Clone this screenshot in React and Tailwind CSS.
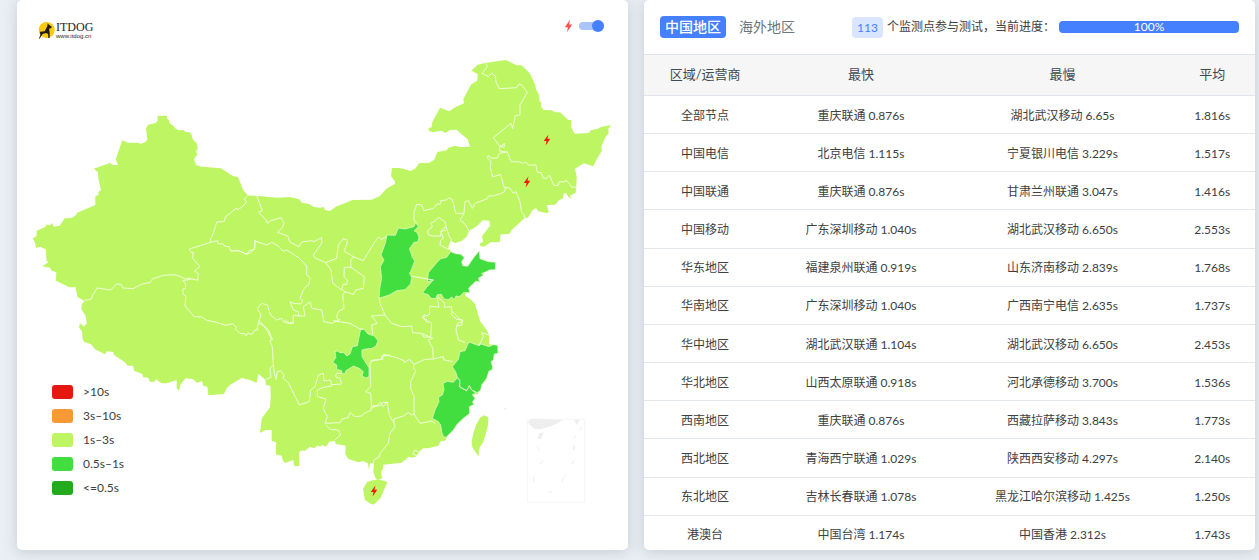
import { useState } from "react";

const legend = [
  { label: ">10s", color: "bg-[#e61610]" },
  { label: "3s–10s", color: "bg-[#f79a36]" },
  { label: "1s–3s", color: "bg-[#bef663]" },
  { label: "0.5s–1s", color: "bg-[#42dd3f]" },
  { label: "<=0.5s", color: "bg-[#24aa1d]" },
];

const rows = [
  ["全部节点", "重庆联通 0.876s", "湖北武汉移动 6.65s", "1.816s"],
  ["中国电信", "北京电信 1.115s", "宁夏银川电信 3.229s", "1.517s"],
  ["中国联通", "重庆联通 0.876s", "甘肃兰州联通 3.047s", "1.416s"],
  ["中国移动", "广东深圳移动 1.040s", "湖北武汉移动 6.650s", "2.553s"],
  ["华东地区", "福建泉州联通 0.919s", "山东济南移动 2.839s", "1.768s"],
  ["华南地区", "广东深圳移动 1.040s", "广西南宁电信 2.635s", "1.737s"],
  ["华中地区", "湖北武汉联通 1.104s", "湖北武汉移动 6.650s", "2.453s"],
  ["华北地区", "山西太原联通 0.918s", "河北承德移动 3.700s", "1.536s"],
  ["西南地区", "重庆联通 0.876s", "西藏拉萨移动 3.843s", "1.773s"],
  ["西北地区", "青海西宁联通 1.029s", "陕西西安移动 4.297s", "2.140s"],
  ["东北地区", "吉林长春联通 1.078s", "黑龙江哈尔滨移动 1.425s", "1.250s"],
  ["港澳台", "中国台湾 1.174s", "中国香港 2.312s", "1.743s"],
];

const mainland =
  "M32.7 238.3 36.7 236 36.7 230.7 45.7 226.7 46 224.5 50 225.3 52 223 53.7 226.7 59.7 225.7 64.7 218.3 71.7 218 75.7 215.3 77.3 212.7 95.3 205 95.3 196.7 98.5 194.5 98.3 192 101 190.3 98.3 178.3 98 172.3 93.7 168.7 110 163 113 165 118 165 115.7 159.3 122.3 140.3 128 142.7 138.3 142.7 140.3 144 145 142.3 147.3 139.7 146 128.3 148.3 124.7 155.7 123 157.7 120.7 157.7 115.7 167.3 115.7 166.7 118.3 169 120 169.3 123 172.7 125.3 176 129 179.3 130.3 183.7 130 185.3 132 189.7 132.3 191.7 134.7 192.7 139.3 196.7 143.3 197.7 148.3 196 151.7 197.3 154.3 194 159.3 196 165 201.7 166.7 221 168.3 232.7 176 238 177 243.3 190 248 195.5 256.7 195.7 276.7 197.7 290 197 299.3 199.3 301.7 202.7 308.3 203.7 314 207 319.3 207.7 324 207 324.7 210 330 211 336.7 206.3 345 203.3 352 200 371.7 199.7 380 196 386 189 395 183.7 395 181.5 391 176 392 168 400 168 410.7 171 415.7 168.3 419 163.3 429.3 162.7 434.3 159.7 437.3 152 446.7 150.3 448.3 148 455 145.7 460 147 470 146.7 467.7 139.3 461.7 134.3 456.7 129.7 450 130 445.7 133 441.7 130.7 432.7 132.3 428.7 130.7 428.7 128 431.7 127.3 432.3 122 440 107.7 449.3 111.3 456 106.7 464 103.3 463.3 99.3 465 95.7 471.3 84.3 477.3 80.7 477.7 74 471.3 70.7 477.7 64.7 485 63 505.7 60 516.7 65.3 521.3 65.3 525.3 68.7 530 73.7 535.3 85 536 89.3 539.3 95.7 539.3 101 541.3 102.7 541 106.7 543.7 110 551.7 110.3 555.3 112.3 560 112.3 568.3 120 571.3 120 571 127.3 574.7 133.7 588.7 133 590.7 130.3 597.3 129 602 126.7 611 125 608.3 129 608.7 133.3 605.3 137.3 601.3 146.7 602 150.7 596.7 159.3 593.3 166.3 584 163.3 575 168.7 576.7 176.7 576.3 186.7 575.7 192.7 570 195.7 571 199 568.3 196.7 565.7 193 563.7 193.3 562.7 198.7 559 200 555 204.7 546.7 205 548.7 211.7 547.3 213.3 538.3 211.3 536 208 532.7 210 527.7 218 525 217.7 511.7 230 509.3 234 500.7 234.3 499.7 242.3 490.7 242.3 484 246.7 480.3 246 480 243.3 483.3 241.7 482 236 490 226 489.3 220.7 482.7 220.3 477.3 225.7 469 231 466.7 236.7 461.7 241 455 243 450.7 240.7 448.3 246.7 450.7 251.7 455.7 253.7 461 254.3 464.3 258 461.7 261.3 462.7 265.7 467.7 266.3 474 257.3 479.3 250.7 480 258.7 488.3 261.7 495.7 262.3 495.3 269.7 489.3 270 485 272.3 478.3 278.3 480 282 476 281 468.7 288 469.7 292.7 465 293.7 465.7 296 471.7 300.3 475 304 480 321 486.7 330 489 335 489 344.3 497.7 345.3 498 353.3 494.3 354 493.3 360 491 361.7 492 370 489 371 486.7 378.3 481.7 385 480.7 390 477.3 391.7 478.5 394 472.3 394.7 475 398.3 472.3 402.3 474.3 404.3 469.3 406.7 469.7 413.3 463.3 418.3 457.3 424 453.3 430 448.3 435 445 440.7 440.7 441.3 438.3 445.7 428.3 448.3 423 448.3 419.3 451.7 416 456.7 411.7 457.7 409 456.7 401.7 462.7 383.3 464.7 382.7 469.3 381 471.7 382 478.3 378.3 480 376 479.3 373.3 471.7 374 463.3 370 463.3 368.7 470 368 463.3 363.3 461.3 358.3 462.3 348.3 459 345.3 454 345.7 445.7 336 444 334.7 440.7 329.3 441.7 326 446.7 322 445 320 446.7 318 445.5 314 448.3 310 446.7 305 450.7 301 450.5 299 452.7 299.3 466 294.3 466.3 293.3 460 285 463 282.7 460 281.7 455.7 275.7 454.3 276.3 442.3 271.7 440.7 271.7 430 265.7 430 260 433 261.7 418.3 270 407.3 270.7 396.7 270.3 386 266 385 265.3 380 259.7 374.7 258.3 374.3 256.5 383 250 380 241.7 378 230 385 226.5 388.5 224 394 208.3 395.3 207.3 386.7 203.3 385.7 202 381.3 196.7 382.7 193.3 379.3 185.7 378.3 180.7 384 179 390.7 176.7 388.3 176.7 380 166.7 383.3 161.5 383.3 156 379.3 154 382 150 381.7 148.3 377.7 143.3 377.3 142.3 374 134 370.7 133.3 365.7 127.3 365.7 125 362.3 114 355 113.3 352 106.7 351.3 105 354.3 95 349.3 91 344.3 84.3 342 82.7 339.3 82 331.7 79 327.3 80 323.3 84 326.7 86.7 323.3 85.7 316 81.3 309.3 81.7 304 84.7 301.3 77.3 296.7 75.7 287.3 69.3 287.3 61.7 283.5 56 280.7 56.3 272.3 51.7 270.7 50 267.7 42.3 266.3 48.3 262.3 46.3 260 46 249.3 40 246.7 36 248 35.3 243.3Z";

// Each sheet is drawn on its own fine grid, three units to one map unit.
const fastProvinces = [
  {
    sheet: "translate(370 200) scale(.33333)",
    d: "M51 105 76 106 85 84 105 87 132 80 137 68 145 80 132 92 142 98 147 112 143 126 132 127 118 147 122 155 127 173 134 182 123 213 118 220 125 230 122 252 105 269 80 272 60 284 27 295 30 260 35 235 31 200 42 180 33 165 46 130ZM242 155 257 161 273 163 283 174 275 184 278 197 293 199 312 172 328 152 330 176 355 185 377 187 376 209 358 210 345 217 335 220 340 226 325 235 330 246 318 243 296 264 299 278 282 277 268 290 258 288 253 299 245 291 235 299 222 297 214 283 202 284 197 296 183 295 175 284 157 279 170 262 190 240 172 246 175 218 200 188 212 176 230 172Z",
  },
  {
    sheet: "translate(240 300) scale(.33333)",
    d: "M362 88 372 88 384 102 403 108 414 122 408 138 396 145 378 147 366 150 366 170 378 190 387 203 387 230 378 234 366 228 370 215 358 205 340 198 318 212 314 222 306 220 305 212 290 208 290 195 278 187 288 172 285 155 292 153 300 158 312 158 320 168 330 162 337 140 352 137 357 112Z",
  },
  {
    sheet: "translate(370 310) scale(.33333)",
    d: "M297 96 327 107 333 102 357 110 370 104 383 106 384 130 373 132 370 150 363 155 368 170 366 180 357 183 350 205 335 225 332 240 322 248 305 240 298 227 290 242 270 232 268 210 262 203 258 188 247 170 265 148 270 125 285 122ZM262 203 270 210 268 230 290 242 298 227 305 240 318 250 307 254 315 265 307 277 313 283 298 290 299 310 280 325 262 342 250 360 235 375 228 382 220 380 215 365 212 345 205 335 187 325 195 300 207 275 205 262 217 255 222 240 219 220 232 214 250 217Z",
  },
];

const borders = [
  {
    sheet: "translate(20 100) scale(.33333)",
    d: "M684 286 673 297 680 306 665 322 652 329 650 324 617 350 612 365 590 366 580 400 571 418 572 427M572 427 508 447 514 458 520 457 518 475 540 500 523 513 535 520 533 541 503 534 497 538 480 529 462 524 430 526 397 537 392 547 367 552 339 566 308 564 303 553 290 552 272 570 232 564 218 585 214 598 194 601M572 427 592 422 594 431 608 432 618 440 627 439 632 453 655 452 665 456 680 463 692 458 705 444 704 422 720 429",
  },
  {
    sheet: "translate(60 240) scale(.33333)",
    d: "M392 118 368 122 377 130 376 145 368 148 370 163 378 168 375 198 403 230 425 231 440 241 462 245 475 249 498 256 518 251 530 262 526 266 540 280 555 282 558 288 564 279 575 284 585 270 592 270 595 248M595 248 613 259 625 278 635 300 629 302 637 320 640 375M640 375 630 385 633 412 617 418M595 248 603 225 592 205 605 190 622 195 632 225 650 240 665 235 672 247 690 250 700 245 700 228",
  },
  {
    sheet: "translate(230 180) scale(.33333)",
    d: "M80 47 97 92 85 97 108 120 112 130 122 122 153 113 162 128 158 142 142 157 173 168 180 186 207 200 215 186 245 182 252 185 274 173 276 188 250 225 253 233 287 248M287 248 320 235 325 195 340 176 352 180 350 195 342 213 372 231 362 240 363 262 343 262 342 290 352 300 350 314 340 312 335 330 308 310 303 270 287 248M372 231 400 242 410 225 440 177 445 172 455 178 470 170M363 262 403 290 400 325 378 330 370 343 345 335 338 330M345 335 338 345 342 385 325 395 320 410 325 422M0 212 25 212 50 222 58 212 73 208 75 183 110 195 125 187 145 198 160 214 170 210 205 232 230 258 230 285 240 293 237 313 222 325 210 355 218 362 213 372 190 370 180 365 190 390 205 395 207 408 190 405 190 430 178 430 165 420M205 408 225 408 220 380 240 366 246 385 275 390 282 425 305 430 330 418M310 422 360 430 390 447 400 447M428 462 425 435 442 430 425 408 465 405 450 370 448 352M465 405 485 430 515 440 545 438 548 458 575 460 582 472 600 470",
  },
  {
    sheet: "translate(400 50) scale(.33333)",
    d: "M258 40 262 50 246 70 265 80 275 70 286 78 288 95 298 116 350 113 357 102 365 105 382 127 360 165 360 195 346 197 338 236 333 220 280 263 300 290 298 303 322 306M300 290 314 280 312 292 300 288M322 306 333 335 355 335 370 340 375 335 385 345 408 345 412 367 423 368 430 385 440 385 448 375 462 407 475 405 477 396 495 395 497 390 508 400 515 412 528 411M322 306 298 310 292 324 275 325 264 317 262 324 273 335 271 353 278 381 302 373 312 412 318 412M318 412 330 415 340 430 348 425 360 455 365 488 373 495 373 505M318 412 312 427 280 438 265 438 262 446 225 460 217 475 205 452 195 455 192 490 180 510 195 522 207 543M192 490 167 490 160 460 157 448 147 443 140 450 122 452 122 462 110 463 100 475 72 482 65 465 50 463 42 487 42 510 50 520M115 502 135 515 138 530 125 540 122 558 100 558 85 555 83 542 98 530 92 520 105 513ZM138 530 148 560 155 570 145 598 120 585 122 570 130 565 122 545 138 540",
  },
  {
    sheet: "translate(370 200) scale(.33333)",
    d: "M122 228 172 237 190 240M202 296 205 310 207 322 180 318 178 343 157 352 175 370M202 290 225 310 222 322 245 320 245 345 260 358 278 360 275 375 260 378",
  },
  {
    sheet: "translate(240 300) scale(.33333)",
    d: "M100 195 103 220 108 238 112 215 122 212 132 225 130 235 145 248 178 315 208 305 212 270 225 260 235 225 250 220 252 243 272 240 275 258 250 262 232 270 232 290 258 297 250 325 262 350 255 370 300 368 305 358 325 352 330 337 345 350 365 348 372 340 395 330 396 318 420 317 430 307 445 308M275 254 305 252 300 235 286 230 290 220 305 220M258 375 270 388 295 390 302 405 285 420M395 320 392 280 377 275 392 260 390 190 400 182 425 178 425 168 450 165M55 60 85 90 98 120",
  },
  {
    sheet: "translate(370 310) scale(.33333)",
    d: "M0 155 10 150 38 148 40 133 80 143 102 152 103 158 118 148 132 163 165 148 190 147 220 140 222 150 248 155M155 70 188 85 175 90 188 115 190 147M165 12 158 22 185 40 182 80M242 0 262 20 278 35 262 40 258 60 265 90 285 97M357 75 335 68 340 80 327 107M132 163 130 175 138 182 122 215 122 235 132 260 132 315M0 295 20 288 32 277 38 290 52 278 58 315 72 340 72 327 100 318 115 308 125 315 132 312 150 340 185 333 195 340M72 340 75 350 60 370 55 400 30 430 28 440 12 450 10 460M128 432 135 420 150 428 140 437Z",
  },
];

function Bolt({ x, y, fill }) {
  return (
    <path
      transform={`translate(${x} ${y})`}
      d="M1.4 -5.5 -3.3 1 -0.5 1 -1.4 5.5 3.3 -1.3 0.5 -1.3Z"
      fill={fill}
    />
  );
}

function ChinaMap() {
  return (
    <svg viewBox="17 0 611 550" className="block h-auto w-full" role="img" aria-label="中国地区">
      <path d={mainland} fill="#bef663" />
      <path
        d="M363 489 367 482 374 480 381 480 387.5 482 384 490 380.5 498 374 504.5 371 504 365 500Z"
        fill="#bef663"
      />
      <path
        transform="translate(370 310) scale(.33333)"
        d="M343 316 355 322 354 345 348 370 340 395 328 415 325 440 318 428 307 412 305 395 310 370 318 345 330 323Z"
        fill="#bef663"
      />
      {fastProvinces.map((p) => (
        <path key={p.sheet} transform={p.sheet} d={p.d} fill="#42dd3f" stroke="#eefcd8" strokeWidth="2" />
      ))}
      {borders.map((b) => (
        <path
          key={b.sheet}
          transform={b.sheet}
          d={b.d}
          fill="none"
          stroke="#f0fcdc"
          strokeWidth="3"
          strokeLinejoin="round"
        />
      ))}
      <Bolt x={547} y={140} fill="#ee1c10" />
      <Bolt x={527} y={182} fill="#ee1c10" />
      <Bolt x={374} y={491} fill="#ee1c10" />
      {/* South China Sea inset */}
      <g transform="translate(500 380) scale(.33333)">
        <path d="M82 118H254V367H82Z" fill="none" stroke="#f5f5f5" strokeWidth="3" />
        <path
          d="M82 125 95 116 190 120 160 136 122 148 102 146ZM222 120H239L231 135ZM117 160 131 157 124 176 112 176ZM219 194H224V210H219ZM220 238 222 248 213 254ZM10 86 20 82 17 89Z"
          fill="#eeeeee"
        />
        <path
          d="M246 140 238 152M229 164 222 176M113 201 118 214M118 252 130 243M100 290 102 308M196 286 184 306M145 338 158 334"
          fill="none"
          stroke="#eeeeee"
          strokeWidth="3"
        />
      </g>
    </svg>
  );
}

function Logo() {
  return (
    <div className="flex items-center gap-px">
      <svg viewBox="0 0 51 51" className="size-[17px]" aria-hidden="true">
        <circle cx="26" cy="24" r="24" fill="#f9cb0c" />
        <path
          d="M29 4 33 8 41 14 40 18 33 20 35 30 35 48 31 48 30 36 24 33 14 36 10 42 5 50 3 49 7 40 6 29 20 28 24 20 28 12Z"
          fill="#241c14"
        />
      </svg>
      <div className="flex flex-col text-[#2b2422]">
        <span className="font-['Liberation_Serif',serif] text-[12px] leading-[12px]">ITDOG</span>
        <span className="font-['Liberation_Sans',sans-serif] text-[6px] leading-[6px]">www.itdog.cn</span>
      </div>
    </div>
  );
}

export default function App() {
  const [fast, setFast] = useState(true);
  const [area, setArea] = useState("中国地区");

  return (
    <main className="grid min-h-screen grid-cols-2 items-start gap-4 bg-[#ebeff4] pr-1 pb-2.5 pl-[17px] font-[Lato,'Noto_Sans_CJK_SC',sans-serif] text-xs text-[#404040]">
      <section className="relative h-[550px] overflow-hidden rounded-[5px] bg-white shadow-[0_2px_14px_rgba(80,95,120,0.25)]">
        <ChinaMap />
        <div className="absolute top-[21px] left-[21px]">
          <Logo />
        </div>
        <label className="absolute top-[19px] right-6 flex cursor-pointer items-center gap-1.5">
          <svg viewBox="-4 -6 8 12" className="h-[14px] w-[9px]" aria-hidden="true">
            <Bolt x={0} y={0} fill="#f8524d" />
          </svg>
          <input
            type="checkbox"
            role="switch"
            aria-label="闪电"
            checked={fast}
            onChange={() => setFast(!fast)}
            className="peer sr-only"
          />
          <span className="flex h-2 w-[25px] items-center justify-start rounded-full bg-[#abc5fc] peer-checked:justify-end">
            <span className="size-3 rounded-full bg-[#4480ff]" />
          </span>
        </label>
        <ul className="absolute bottom-[50px] left-[35px] flex flex-col">
          {legend.map((item) => (
            <li key={item.label} className="flex h-6 items-center gap-2.5">
              <span className={`h-3.5 w-[21px] rounded-[3px] ${item.color}`} />
              <span>{item.label}</span>
            </li>
          ))}
        </ul>
      </section>

      <section className="h-[550px] overflow-hidden rounded-[5px] bg-white shadow-[0_2px_14px_rgba(80,95,120,0.25)]">
        <header className="flex h-[54px] items-center px-4">
          <div className="flex gap-2">
            {["中国地区", "海外地区"].map((name) => (
              <button
                key={name}
                type="button"
                onClick={() => setArea(name)}
                className={`h-[22px] rounded px-[5px] text-sm leading-[22px] whitespace-nowrap ${
                  area === name ? "bg-[#4480ff] font-medium text-white" : "text-[#6c757d]"
                }`}
              >
                {name}
              </button>
            ))}
          </div>
          <p className="ml-auto flex items-center gap-1 whitespace-nowrap">
            <span className="rounded bg-[#dae6ff] px-[5px] leading-[21px] text-[#4480ff]">113</span>
            个监测点参与测试，当前进度：
          </p>
          <div
            role="progressbar"
            aria-label="当前进度"
            aria-valuenow={100}
            className="ml-1 flex h-3 w-[180px] items-center justify-center rounded bg-[#4480ff] text-white"
          >
            100%
          </div>
        </header>
        <table className="h-[500px] w-full table-fixed border-collapse text-center">
          <colgroup>
            <col className="w-[20%]" />
            <col className="w-[31%]" />
            <col className="w-[35%]" />
            <col className="w-[14%]" />
          </colgroup>
          <thead>
            <tr className="h-[41px] border-y border-[#dfe5eb] bg-[#f6f6f6] text-[13px] text-[#3d4a50]">
              {["区域/运营商", "最快", "最慢", "平均"].map((h) => (
                <th key={h} scope="col" className="font-normal">
                  {h}
                </th>
              ))}
            </tr>
          </thead>
          <tbody>
            {rows.map((row) => (
              <tr key={row[0]} className="h-[38px] border-b border-[#e2e7ec]">
                {row.map((cell, i) => (
                  <td key={i} className="pt-0.5">
                    {cell}
                  </td>
                ))}
              </tr>
            ))}
          </tbody>
        </table>
      </section>
    </main>
  );
}
